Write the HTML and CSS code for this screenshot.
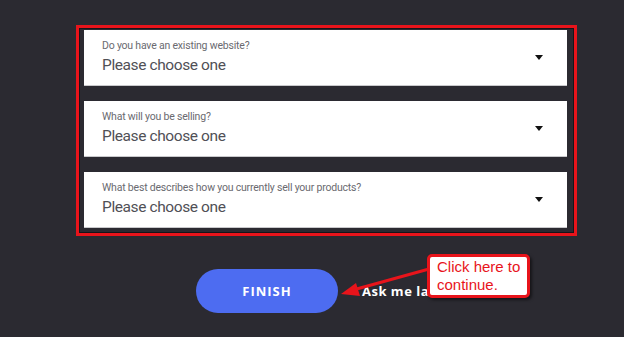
FILE: index.html
```html
<!DOCTYPE html>
<html>
<head>
  <link rel="stylesheet" href="styles.css">
</head>
<body>
  <div class="page">
    <div class="frame">
      <div class="field">
        <div class="field-label">Do you have an existing website?</div>
        <div class="field-value">Please choose one</div>
        <span class="caret"></span>
      </div>
      <div class="field">
        <div class="field-label">What will you be selling?</div>
        <div class="field-value">Please choose one</div>
        <span class="caret"></span>
      </div>
      <div class="field">
        <div class="field-label">What best describes how you currently sell your products?</div>
        <div class="field-value">Please choose one</div>
        <span class="caret"></span>
      </div>
    </div>

    <div class="actions">
      <button class="finish-btn">FINISH</button>
      <span class="later-link">Ask me later</span>
    </div>

    <!-- annotation -->
    <svg class="callout-arrow" width="100" height="40" viewBox="0 0 100 40">
      <line x1="90" y1="12" x2="14" y2="33" stroke="#e8141b" stroke-width="3" />
      <polygon points="2,37 17,26 21,39" fill="#e8141b" />
    </svg>
    <div class="callout">Click here to<br>continue.</div>
  </div>
</body>
</html>
```

FILE: styles.css
```css
body {
  margin: 0;
  width: 624px;
  height: 337px;
  overflow: hidden;
  background: #2b2a31;
  font-family: 'Open Sans', 'Liberation Sans', sans-serif;
}

.page {
  position: relative;
  height: 100%;
  padding: 25px 0 0 76px;
  box-sizing: border-box;
}

.frame {
  width: 501px;
  box-sizing: border-box;
  border: 3px solid #e8141b;
  padding: 2px 7px 5px 5px;
  display: flex;
  flex-direction: column;
  gap: 15px;
  box-shadow: inset 0 0 0 1px #16151a;
}

.field {
  position: relative;
  height: 56px;
  box-sizing: border-box;
  background: #fff;
  padding: 9px 0 0 18px;
  border-bottom: 1px solid #c9c9cc;
  font-family: Roboto, 'Open Sans', sans-serif;
}

.field-label {
  font-size: 10.5px;
  line-height: 14px;
  color: #6a6a70;
  letter-spacing: -0.2px;
}

.field-value {
  margin-top: 1px;
  font-size: 15.5px;
  line-height: 22px;
  color: #505056;
  letter-spacing: -0.4px;
}

.caret {
  position: absolute;
  right: 24px;
  top: 25px;
  width: 0;
  height: 0;
  border-left: 4px solid transparent;
  border-right: 4px solid transparent;
  border-top: 5px solid #111;
}

.actions {
  display: flex;
  align-items: center;
  gap: 24px;
  margin-top: 33px;
  padding-left: 120px;
}

.finish-btn {
  width: 142px;
  height: 44px;
  border: none;
  border-radius: 22px;
  background: #4d6cf1;
  color: #fff;
  font-family: inherit;
  font-size: 13px;
  font-weight: 700;
  letter-spacing: 1px;
}

.later-link {
  color: #fff;
  font-size: 13px;
  font-weight: 700;
  letter-spacing: 0.5px;
}

.callout-arrow {
  position: absolute;
  left: 339px;
  top: 257px;
}

.callout {
  position: absolute;
  left: 427px;
  top: 254px;
  width: 103px;
  height: 44px;
  box-sizing: border-box;
  border: 3px solid #e8141b;
  border-radius: 5px;
  background: #fff;
  box-shadow: 2px 2px 3px rgba(0,0,0,0.5);
  padding: 1px 0 0 7px;
  color: #e8141b;
  font-family: 'Liberation Sans', Arial, sans-serif;
  font-size: 15px;
  line-height: 18px;
}
```
